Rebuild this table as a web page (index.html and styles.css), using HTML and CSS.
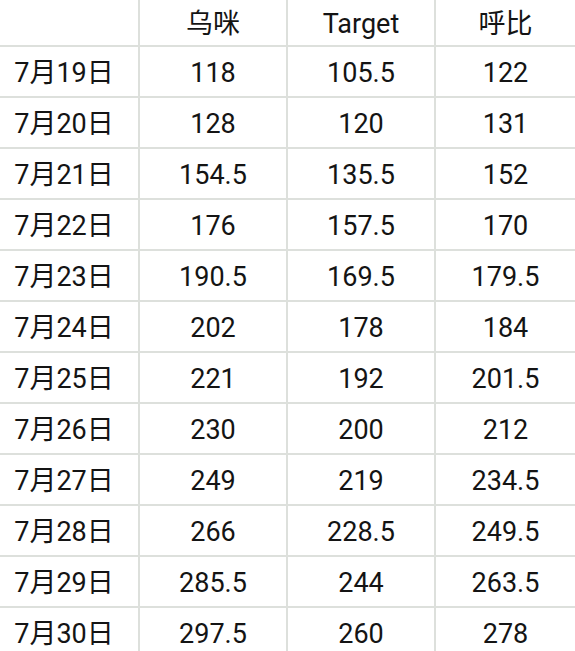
FILE: index.html
```html
<!DOCTYPE html>
<html lang="zh">
<head>
<meta charset="utf-8">
<link rel="stylesheet" href="styles.css">
</head>
<body>
<div class="grid">
  <div class="cell head"></div><div class="cell head">乌咪</div><div class="cell head">Target</div><div class="cell head">呼比</div>
  <div class="cell date">7月19日</div><div class="cell">118</div><div class="cell">105.5</div><div class="cell">122</div>
  <div class="cell date">7月20日</div><div class="cell">128</div><div class="cell">120</div><div class="cell">131</div>
  <div class="cell date">7月21日</div><div class="cell">154.5</div><div class="cell">135.5</div><div class="cell">152</div>
  <div class="cell date">7月22日</div><div class="cell">176</div><div class="cell">157.5</div><div class="cell">170</div>
  <div class="cell date">7月23日</div><div class="cell">190.5</div><div class="cell">169.5</div><div class="cell">179.5</div>
  <div class="cell date">7月24日</div><div class="cell">202</div><div class="cell">178</div><div class="cell">184</div>
  <div class="cell date">7月25日</div><div class="cell">221</div><div class="cell">192</div><div class="cell">201.5</div>
  <div class="cell date">7月26日</div><div class="cell">230</div><div class="cell">200</div><div class="cell">212</div>
  <div class="cell date">7月27日</div><div class="cell">249</div><div class="cell">219</div><div class="cell">234.5</div>
  <div class="cell date">7月28日</div><div class="cell">266</div><div class="cell">228.5</div><div class="cell">249.5</div>
  <div class="cell date">7月29日</div><div class="cell">285.5</div><div class="cell">244</div><div class="cell">263.5</div>
  <div class="cell date">7月30日</div><div class="cell">297.5</div><div class="cell">260</div><div class="cell">278</div>
</div>
</body>
</html>
```
FILE: styles.css
```css
html, body {
  margin: 0;
  padding: 0;
  background: #ffffff;
}
body {
  font-family: Roboto, "Noto Sans CJK SC", sans-serif;
  color: #141414;
  overflow: hidden;
}
.grid {
  display: grid;
  grid-template-columns: 138px 146px 146px 139px;
  grid-template-rows: 45px;
  grid-auto-rows: 49px;
  gap: 2px;
  background: #dde0dc;
  width: 575px;
}
.cell {
  background: #ffffff;
  display: flex;
  align-items: center;
  justify-content: center;
  font-size: 27px;
  line-height: 1;
  padding-top: 4px;
}
.head {
  padding-top: 4px;
}
.date {
  padding-right: 10px;
}
```
